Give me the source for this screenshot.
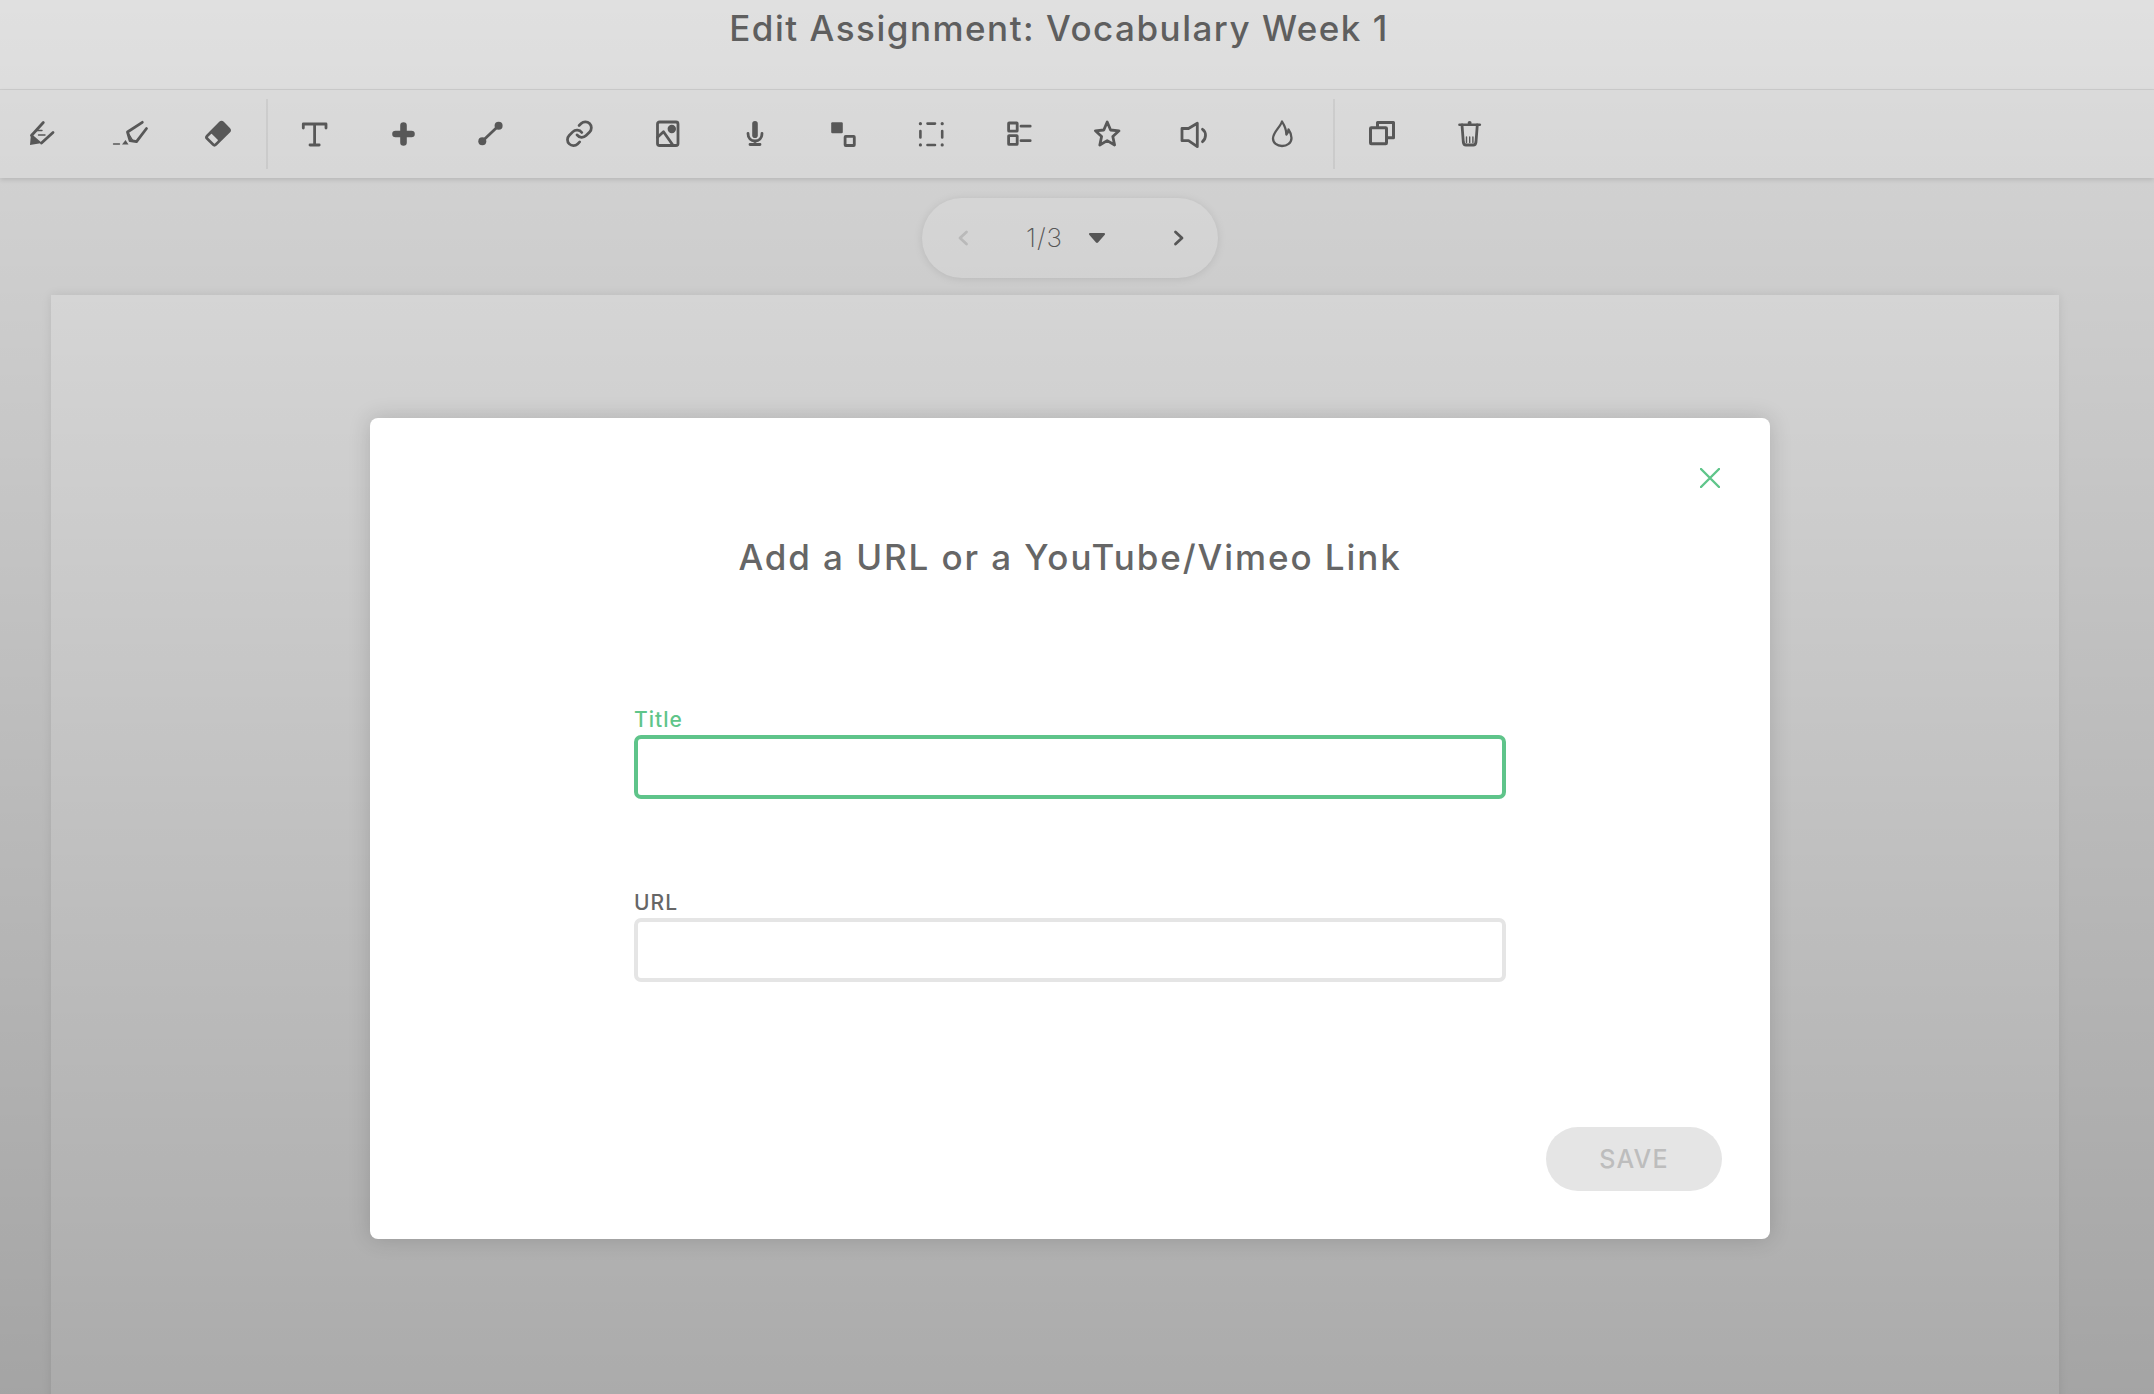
<style>
:global(body) { margin: 0; background: #f5f5f5; }
.page { position: relative; height: 1394px; overflow: hidden; background: #f5f5f5; font-family: Inter, "Liberation Sans", sans-serif; color: #666; }
.head { height: 89px; background: #ffffff; border-bottom: 2px solid #ececec; box-sizing: content-box; display: flex; justify-content: center; padding-right: 36px; }
.head h1 { margin: 0; font-size: 35px; font-weight: 500; line-height: 56px; letter-spacing: 1.5px; color: #6c6c6c; white-space: nowrap; }
.toolbar { height: 88px; margin-top: -1px; background: #fcfcfc; display: flex; align-items: center; box-shadow: 0 2px 5px rgba(0,0,0,.12); }
.group { display: flex; gap: 48px; }
.g1 { margin-left: 21px; }
.g2 { margin-left: 26px; }
.g3 { margin-left: 26px; }
.sep { width: 2px; height: 70px; background: #ededed; margin-left: 29.4px; }
.sep2 { margin-left: 30.6px; }
.icon { width: 40px; height: 40px; display: block; fill: none; stroke: #666; stroke-width: 2.8; stroke-linecap: round; stroke-linejoin: round; }
.solid { fill: #666; stroke: none; }
.thin { stroke-width: 1.4; }
.flame { stroke-width: 2.3; }
.pager { width: 296px; height: 80px; margin: 20px auto 0; transform: translateX(-7px); border-radius: 40px; background: #fbfbfb; display: flex; align-items: center; box-shadow: 0 1px 10px rgba(0,0,0,.1); box-sizing: border-box; padding-left: 35px; }
.pager .chev { width: 12px; height: 16px; fill: none; stroke-width: 2.8; stroke-linecap: round; stroke-linejoin: round; display: block; }
.prev { stroke: #dcdcdc; }
.next { stroke: #666; margin-left: 67px; }
.num { margin-left: 57px; font-size: 26px; font-weight: 200; letter-spacing: 1px; width: 37px; line-height: 30px; color: #666; white-space: nowrap; }
.caret { width: 18px; height: 12px; display: block; margin-left: 24.5px; }
.sheet { height: 1200px; margin: 17px 95px 0 51px; background: #ffffff; box-shadow: 0 0 10px rgba(0,0,0,.09); }
.shade { position: absolute; inset: 0; background: linear-gradient(rgba(0,0,0,.12), rgba(0,0,0,.33)); display: flex; justify-content: center; align-items: flex-start; padding: 418px 14px 0 0; box-sizing: border-box; }
.modal { position: relative; width: 1400px; height: 821px; box-sizing: border-box; background: #fff; border-radius: 8px; box-shadow: 0 0 22px rgba(0,0,0,.16); display: flex; flex-direction: column; align-items: center; padding-top: 114px; }
.close { position: absolute; top: 50px; right: 50px; width: 20px; height: 20px; display: block; stroke: #5fc58a; stroke-width: 2.4; stroke-linecap: round; fill: none; }
.modal h2 { margin: 0 0 126px; font-size: 35px; font-weight: 500; line-height: 50px; letter-spacing: 1.9px; color: #666; white-space: nowrap; }
.field { width: 872px; display: flex; flex-direction: column; gap: 3px; }
.field + .field { margin-top: 92px; }
label { font-size: 21px; font-weight: 500; line-height: 24px; letter-spacing: 1px; color: #666; }
label.on { color: #5fc58a; }
input { display: block; width: 100%; height: 64px; box-sizing: border-box; border: 4px solid #e5e5e5; border-radius: 7px; background: #fff; outline: none; margin: 0; padding: 0 14px; }
input.on { border-color: #5fc48a; }
.save { position: absolute; right: 48px; bottom: 48px; width: 176px; height: 64px; border: 0; border-radius: 32px; background: #e5e5e5; color: #bdbdbd; font-family: inherit; font-size: 25px; font-weight: 500; letter-spacing: 1.2px; padding: 0; }
</style>

<div class="page">
  <header class="head"><h1>Edit Assignment: Vocabulary Week 1</h1></header>

  <div class="toolbar">
    <div class="group g1">
      <svg class="icon" viewBox="0 0 40 40">
        <path class="solid" d="M9 31 10 19.5 21 29Z"/>
        <path d="M22.3 8.5 10.5 21.5M32 18.5 20.5 29"/>
        <path class="thin" d="M15 16.5 21 16.5M17.5 21 24 21"/>
      </svg>
      <svg class="icon" viewBox="0 0 40 40">
        <path class="thin" d="M4.5 30H10.5"/>
        <path class="solid" d="M13 30.5 16.5 26 19.5 30.5Z"/>
        <path d="M33.3 8.3 18.5 18 21 26.5 27.5 27.7 37.5 14.5"/>
        <path class="thin" d="M18.5 18 24 27"/>
      </svg>
      <svg class="icon" viewBox="0 0 40 40">
        <rect class="solid" x="-12.5" y="-7.5" width="25" height="15" rx="3.2" transform="translate(21 19.7) rotate(-45)"/>
        <rect x="-9.7" y="-4.7" width="5.2" height="9.4" rx=".6" transform="translate(21 19.7) rotate(-45)" style="fill:#fcfcfc;stroke:none"/>
      </svg>
    </div>
    <div class="sep"></div>
    <div class="group g2">
      <svg class="icon" viewBox="0 0 40 40"><path d="M9.3 14V10H32V14M20.6 10V31M16 31H25.2"/></svg>
      <svg class="icon" viewBox="0 0 40 40"><path d="M21.5 11.5V28.5M13.5 20H29.5" style="stroke-width:6.6"/></svg>
      <svg class="icon" viewBox="0 0 40 40">
        <path d="M12.3 27.3 28.6 11.7"/>
        <circle class="solid" cx="12.3" cy="27.3" r="4"/>
        <circle class="solid" cx="28.6" cy="11.7" r="4"/>
      </svg>
      <svg class="icon" viewBox="0 0 40 40">
        <g transform="translate(21.4 19.7) scale(1.2) translate(-12 -12)" style="stroke-width:2.3">
          <path d="M10 13a5 5 0 0 0 7.54.54l3-3a5 5 0 0 0-7.07-7.07l-1.72 1.71"/>
          <path d="M14 11a5 5 0 0 0-7.54-.54l-3 3a5 5 0 0 0 7.07 7.07l1.71-1.71"/>
        </g>
      </svg>
      <svg class="icon" viewBox="0 0 40 40">
        <rect x="11.5" y="8" width="20.5" height="23.5" rx="2"/>
        <circle class="solid" cx="25.8" cy="15" r="4.2"/>
        <path d="M11.5 23.3 17.5 17.7 26.8 31"/>
      </svg>
      <svg class="icon" viewBox="0 0 40 40">
        <rect class="solid" x="18.2" y="7" width="5.6" height="17" rx="2.8"/>
        <path d="M14 19.5C14 24.5 17 27 21 27S28 24.5 28 19.5M21 27V30.5M16 30.5H26"/>
      </svg>
      <svg class="icon" viewBox="0 0 40 40">
        <rect class="solid" x="9.2" y="8.3" width="11.6" height="11" rx="1.2"/>
        <rect x="23.1" y="22.3" width="9.2" height="9.2" rx=".6"/>
      </svg>
      <svg class="icon" viewBox="0 0 40 40">
        <path d="M17.5 9.6H25M17.5 31H25M10.4 17V23.5M32.2 17V23.5" style="stroke-width:2.6"/>
        <path d="M10.4 9.6V9.7M32.2 9.6V9.7M10.4 31V30.9M32.2 31V30.9" style="stroke-width:3.2"/>
      </svg>
      <svg class="icon" viewBox="0 0 40 40">
        <rect x="10.6" y="9" width="8.6" height="8.2" rx=".5"/>
        <rect x="10.6" y="21.6" width="8.6" height="8.8" rx=".5"/>
        <path d="M23 12.2H32.2M23 26.7H32.2"/>
      </svg>
      <svg class="icon" viewBox="0 0 40 40"><path d="M21.2 8 24.6 16 33 16.8 26.8 22.5 28.6 31 21.2 26.6 13.8 31 15.6 22.5 9.4 16.8 17.8 16Z"/></svg>
      <svg class="icon" viewBox="0 0 40 40">
        <path d="M8 14.5H14.5L23.3 9.3V32.7L14.5 26.7H8Z"/>
        <path d="M28.5 15.3C32.5 18 32.5 24.5 28.5 27.7"/>
      </svg>
      <svg class="icon flame" viewBox="0 0 40 40"><path d="M20 7.5C18.5 13 11 18 11 24.5 11 29 15 32 20 32S29.5 29 29.5 24C29.5 20.5 28.3 18 26.5 15.5 26.3 18 25.6 19.5 24.4 20.5 24.4 15 22.2 11 20 7.5Z"/></svg>
    </div>
    <div class="sep sep2"></div>
    <div class="group g3">
      <svg class="icon" viewBox="0 0 40 40" style="stroke-width:3">
        <rect x="9.5" y="13.8" width="16" height="16" rx=".8"/>
        <path d="M16.5 13V8.5H32.5V23.7H26.5"/>
      </svg>
      <svg class="icon" viewBox="0 0 40 40">
        <path d="M10.5 10.8H30.8" style="stroke-width:2.6"/>
        <circle class="solid" cx="20.6" cy="9" r="2"/>
        <path d="M13 11 14.3 28C14.5 30 15.5 31 17 31H24.3C25.8 31 26.8 30 27 28L28.3 11"/>
        <path class="thin" d="M17.5 23V28.5M20.7 23V28.5M23.9 23V28.5"/>
      </svg>
    </div>
  </div>

  <div class="pager">
    <svg class="chev prev" viewBox="0 0 12 16"><path d="M9.5 2 3 8 9.5 14"/></svg>
    <span class="num">1/3</span>
    <svg class="caret" viewBox="0 0 18 12"><path d="M2 1H16C17 1 17.3 2 16.8 2.8L10 10.6C9.4 11.2 8.6 11.2 8 10.6L1.2 2.8C.7 2 1 1 2 1Z" fill="#666"/></svg>
    <svg class="chev next" viewBox="0 0 12 16"><path d="M2.5 2 9 8 2.5 14"/></svg>
  </div>

  <div class="sheet"></div>

  <div class="shade">
    <div class="modal">
      <svg class="close" viewBox="0 0 20 20"><path d="M1 1 19 19M19 1 1 19"/></svg>
      <h2>Add a URL or a YouTube/Vimeo Link</h2>
      <div class="field">
        <label class="on" for="t">Title</label>
        <input class="on" id="t" type="text" />
      </div>
      <div class="field">
        <label for="u">URL</label>
        <input id="u" type="text" />
      </div>
      <button class="save">SAVE</button>
    </div>
  </div>
</div>
